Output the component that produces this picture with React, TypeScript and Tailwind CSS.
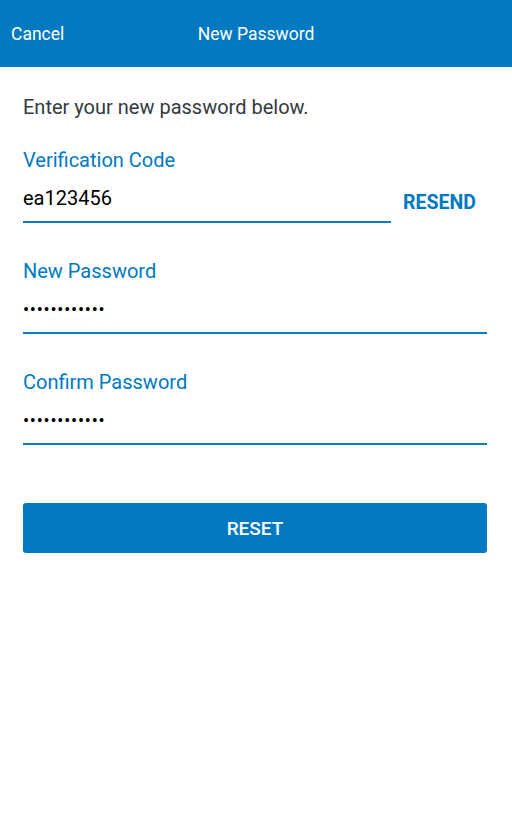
import React from "react";

function Field({ label, value, dots, right }: { label: string; value?: string; dots?: boolean; right?: React.ReactNode }) {
  return (
    <div className="flex items-end">
      <div className="flex-1">
        <div className="text-[20px] leading-[26px] text-[#0079c1]">{label}</div>
        <div className="mt-[12px] h-[26px] text-[20px] leading-[26px] text-black">
          {dots ? <span className="text-[18px] tracking-[0.8px]">••••••••••••</span> : value}
        </div>
        <div className="mt-[10px] h-[2px] bg-[#0a7cc4]" />
      </div>
      {right}
    </div>
  );
}

export default function App() {
  return (
    <div className="min-h-[819px] w-[512px] bg-white" style={{ fontFamily: "Roboto, 'Noto Sans', sans-serif" }}>
      <div className="grid h-[67px] grid-cols-[1fr_auto_1fr] items-center bg-[#0079c1] pt-[1px] text-white">
        <div className="pl-[11px] text-[17.5px]">Cancel</div>
        <div className="text-[17.5px]">New Password</div>
        <div />
      </div>
      <div className="pl-[23px] pr-[25px] pt-[27px]">
        <div className="text-[20px] leading-[26px] text-[#333a40]">Enter your new password below.</div>
        <div className="mt-[27px]">
          <Field
            label="Verification Code"
            value="ea123456"
            right={<div className="w-[96px] pb-[6px] pl-[12px] text-[19.5px] font-bold text-[#0079c1]">RESEND</div>}
          />
        </div>
        <div className="mt-[35px]">
          <Field label="New Password" dots />
        </div>
        <div className="mt-[35px]">
          <Field label="Confirm Password" dots />
        </div>
        <button className="mt-[58px] flex h-[50px] w-full items-center justify-center rounded-[3px] bg-[#0079c1] pt-[3px] text-[19px] font-medium text-white">
          RESET
        </button>
      </div>
    </div>
  );
}
